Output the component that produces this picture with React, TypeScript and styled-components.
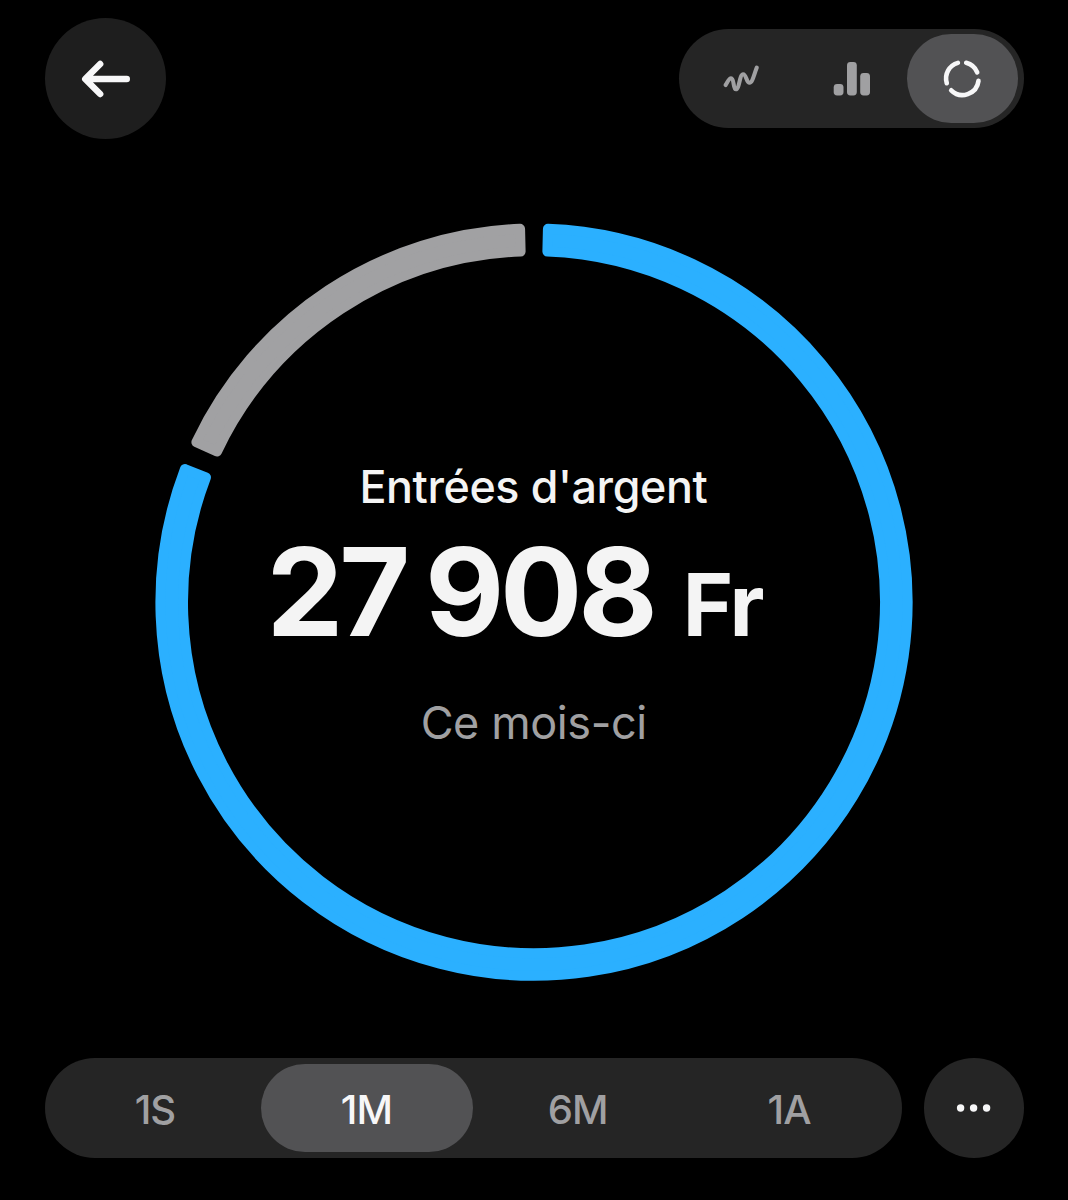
import React, { useState } from "react";
import styled, { createGlobalStyle } from "styled-components";

const GlobalStyle = createGlobalStyle`
  * { box-sizing: border-box; }
  html, body { margin: 0; padding: 0; background: #000; }
  body { font-family: Inter, "Liberation Sans", sans-serif; }
  button { font: inherit; border: 0; padding: 0; margin: 0; cursor: pointer; }
`;

const Screen = styled.main`
  width: 1068px;
  height: 1200px;
  padding: 17.7px 44.5px 0;
  background: #000;
  overflow: hidden;
  display: flex;
  flex-direction: column;
`;

const Header = styled.header`
  height: 121.4px;
  display: flex;
  align-items: center;
  justify-content: space-between;
`;

const RoundButton = styled.button<{ $size: number; $tone: string }>`
  width: ${(p) => p.$size}px;
  height: ${(p) => p.$size}px;
  border-radius: 50%;
  background: ${(p) => p.$tone};
  color: #f7f7f8;
  display: flex;
  align-items: center;
  justify-content: center;
  flex: none;
`;

const Segments = styled.div<{ $width: number; $endPad?: number }>`
  width: ${(p) => p.$width}px;
  height: 99.6px;
  padding: 5.6px;
  padding-right: ${(p) => p.$endPad ?? 5.6}px;
  border-radius: 50px;
  background: #252525;
  display: flex;
  flex: none;
`;

const Segment = styled.button<{ $active: boolean }>`
  flex: 1 1 0;
  border-radius: 44.2px;
  background: ${(p) => (p.$active ? "#525254" : "transparent")};
  color: ${(p) => (p.$active ? "#f7f7f8" : "#a0a0a2")};
  font-size: 40px;
  font-weight: 500;
  line-height: 48px;
  letter-spacing: -1px;
  display: flex;
  align-items: center;
  justify-content: center;
`;

const SegmentLabel = styled.span`
  padding: 4px 1.6px 0 0;
`;

const ChartArea = styled.section`
  margin: 84.4px auto 0;
  width: 760px;
  height: 758px;
  display: grid;
  place-items: start center;
  > * { grid-area: 1 / 1; }
`;

const Ring = styled.svg`
  display: block;
`;

const Summary = styled.div`
  display: flex;
  flex-direction: column;
  align-items: center;
  padding-top: 235.9px;
`;

const Caption = styled.div`
  padding-right: 1.2px;
  font-size: 44.8px;
  line-height: 56px;
  font-weight: 500;
  letter-spacing: -0.4px;
  color: #f4f4f4;
  white-space: nowrap;
`;

const Amount = styled.div`
  margin-top: 7.1px;
  width: 534.8px;
  display: flex;
  align-items: baseline;
  color: #f4f4f4;
  font-weight: 700;
  font-size: 122.2px;
  line-height: 140px;
  white-space: nowrap;
`;

const Digits = styled.span<{ $lead: number }>`
  margin-left: ${(p) => p.$lead}px;
  letter-spacing: -4.3px;
`;

const Currency = styled.span`
  margin-left: 29.3px;
  font-size: 86px;
  letter-spacing: -2px;
`;

const Period = styled.div`
  margin-top: 19.5px;
  padding-right: 0.6px;
  font-size: 45px;
  line-height: 56px;
  letter-spacing: -0.4px;
  color: #a0a0a2;
  white-space: nowrap;
`;

const Footer = styled.footer`
  margin-top: 77px;
  display: flex;
  justify-content: space-between;
`;

const Icon = styled.svg`
  display: block;
  flex: none;
  overflow: visible;
`;

const BackIcon = () => (
  <Icon width="60" height="60" viewBox="75 48 60 60" fill="none" stroke="currentColor" strokeWidth="6.4" strokeLinecap="round" strokeLinejoin="round">
    <path d="M126.8 79H86M100.2 63.9L85.2 79L100.2 94.1" />
  </Icon>
);

const LineIcon = () => (
  <Icon width="50" height="50" viewBox="715.4 53 50 50" fill="none" stroke="currentColor" strokeWidth="4.1" strokeLinecap="round" strokeLinejoin="round">
    <path d="M726 85C728 82 729.3 78.2 731.5 78.2C734.9 78.2 733.2 89.3 736.3 89.3C739.8 89.3 740 74.2 743.5 74.2C746.9 74.2 746.6 82.8 750 82.8C752.8 82.8 754.4 74.5 757.2 67.6" />
  </Icon>
);

const BarsIcon = () => (
  <Icon width="50" height="50" viewBox="826 53 50 50" fill="currentColor">
    <rect x="833.7" y="84" width="9.8" height="11.4" rx="3.4" />
    <rect x="847" y="62" width="9.8" height="33.4" rx="3.4" />
    <rect x="860.2" y="73" width="9.8" height="22.4" rx="3.4" />
  </Icon>
);

const DonutIcon = () => (
  <Icon width="50" height="50" viewBox="937.2 53 50 50" fill="none" stroke="currentColor" strokeWidth="4.6" strokeLinecap="round">
    <path d="M958.1 62.9A16.1 16.1 0 0 0 947 83.2" />
    <path d="M966.4 62.8A16.1 16.1 0 0 1 977.4 72.3" />
    <path d="M978.7 80.9A16.1 16.1 0 0 1 951.4 90.3" />
  </Icon>
);

const DotsIcon = () => (
  <Icon width="40" height="10" viewBox="0.4 0 40 10" fill="currentColor">
    <circle cx="7" cy="5" r="3.7" />
    <circle cx="20" cy="5" r="3.7" />
    <circle cx="33" cy="5" r="3.7" />
  </Icon>
);

const CENTER = { x: 380, y: 379.2 };
const OUTER = 378.6;
const INNER = 346;
const CORNER = 5;

function polar(radius: number, degrees: number, inset: number) {
  const a = (degrees * Math.PI) / 180 + inset / radius;
  return `${(CENTER.x + radius * Math.sin(a)).toFixed(2)} ${(CENTER.y - radius * Math.cos(a)).toFixed(2)}`;
}

/* The outline is inset by the corner radius; a round-joined stroke restores its size. */
function slicePath(from: number, to: number) {
  const o = OUTER - CORNER;
  const i = INNER + CORNER;
  const large = to - from > 180 ? 1 : 0;
  return `M${polar(o, from, CORNER)}A${o} ${o} 0 ${large} 1 ${polar(o, to, -CORNER)}L${polar(i, to, -CORNER)}A${i} ${i} 0 ${large} 0 ${polar(i, from, CORNER)}Z`;
}

const slices = [
  { from: 1.37, to: 291.65, color: "#2bb0ff" },
  { from: 294.6, to: 358.63, color: "#a1a1a3" },
];

const views = [
  { id: "line", label: "Courbe", icon: <LineIcon /> },
  { id: "bars", label: "Barres", icon: <BarsIcon /> },
  { id: "donut", label: "Anneau", icon: <DonutIcon /> },
];

const periods = ["1S", "1M", "6M", "1A"];

export default function App() {
  const [view, setView] = useState("donut");
  const [period, setPeriod] = useState("1M");

  return (
    <>
      <GlobalStyle />
      <Screen>
        <Header>
          <RoundButton $size={121.4} $tone="#1e1e1e" aria-label="Retour">
            <BackIcon />
          </RoundButton>
          <Segments $width={344.4}>
            {views.map((v) => (
              <Segment key={v.id} $active={v.id === view} aria-label={v.label} onClick={() => setView(v.id)}>
                {v.icon}
              </Segment>
            ))}
          </Segments>
        </Header>
        <ChartArea>
          <Ring width="760" height="758" viewBox="0 0 760 758">
            {slices.map((s) => (
              <path key={s.color} d={slicePath(s.from, s.to)} fill={s.color} stroke={s.color} strokeWidth={CORNER * 2} strokeLinejoin="round" />
            ))}
          </Ring>
          <Summary>
            <Caption>Entrées d'argent</Caption>
            <Amount>
              <Digits $lead={0}>27</Digits>
              <Digits $lead={19}>908</Digits>
              <Currency>Fr</Currency>
            </Amount>
            <Period>Ce mois-ci</Period>
          </Summary>
        </ChartArea>
        <Footer>
          <Segments $width={857.6} $endPad={6.6}>
            {periods.map((p) => (
              <Segment key={p} $active={p === period} onClick={() => setPeriod(p)}>
                <SegmentLabel>{p}</SegmentLabel>
              </Segment>
            ))}
          </Segments>
          <RoundButton $size={99.6} $tone="#252525" aria-label="Plus">
            <DotsIcon />
          </RoundButton>
        </Footer>
      </Screen>
    </>
  );
}
